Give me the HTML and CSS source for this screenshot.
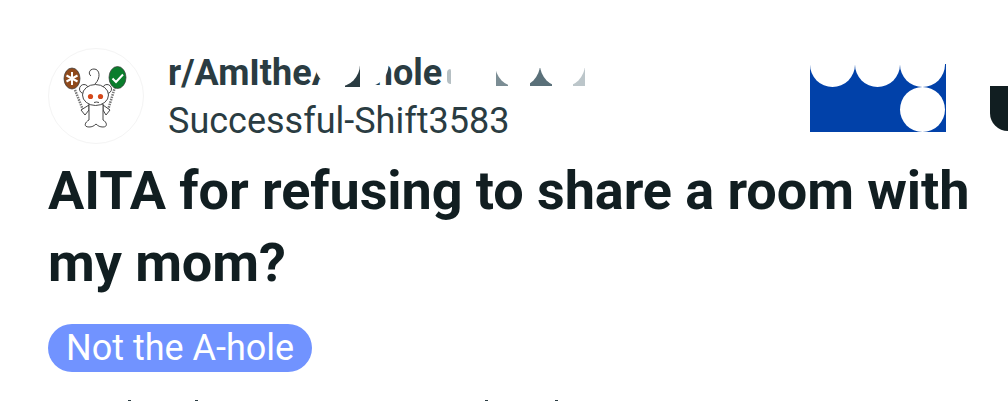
FILE: index.html
```html
<!DOCTYPE html>
<html lang="en">
<head>
    <meta charset="UTF-8">
    <meta name="viewport" content="width=device-width, initial-scale=1.0">
    <title>AITA for refusing to share a room with my mom?</title>
    <link rel="stylesheet" href="styles.css">
</head>
<body>
    <div class="post">
        <div class="post-header">
            <div class="avatar">
                <svg width="96" height="96" viewBox="0 0 96 96">
                    <path d="M27 42 L35 62 M67 39 L60 62" stroke="#777" stroke-width="2.5" stroke-dasharray="1.5 1" fill="none"/>
                    <path d="M47 36 C53 30 52 21 46 21 C41 21 40 26 43 28" stroke="#444" stroke-width="1" fill="none"/>
                    <ellipse cx="24" cy="30.5" rx="8" ry="10.5" fill="#8f4a1c" stroke="#333" stroke-width="0.7"/>
                    <path d="M24 24 V37 M18.5 27.5 L29.5 33.5 M18.5 33.5 L29.5 27.5" stroke="#fff" stroke-width="2"/>
                    <ellipse cx="69.5" cy="29.5" rx="8.5" ry="11" fill="#0a7d2c" stroke="#333" stroke-width="0.7"/>
                    <path d="M64.5 30.5 L68 34 L75 26.5" stroke="#fff" stroke-width="2" fill="none"/>
                    <g fill="#fff" stroke="#333" stroke-width="0.9">
                        <path d="M41 57 L33 62 L37 67 L41 62 Z M55 57 L62 62 L58 67 L55 62 Z"/>
                        <circle cx="36" cy="41" r="4.5"/>
                        <circle cx="59" cy="41" r="4.5"/>
                        <path d="M41 56 L41 72 C37 74 35 79 41 79 C44 79 46 78 48 76 C50 78 52 79 55 79 C60 79 59 74 55 72 L55 56 Z"/>
                        <ellipse cx="47.5" cy="47" rx="13" ry="10.5"/>
                    </g>
                    <circle cx="42.5" cy="48.5" r="2.6" fill="#d4481a"/>
                    <circle cx="52.5" cy="48.5" r="2.6" fill="#d4481a"/>
                    <path d="M46 54.5 Q48.5 53.5 51 54.5" stroke="#333" stroke-width="0.9" fill="none"/>
                </svg>
            </div>
            <div class="post-meta">
                <div class="subreddit">r/AmItheAsshole</div>
                <div class="username">Successful-Shift3583</div>
            </div>
            <!-- only the corners of these show between the dots -->
            <span class="stamp stamp-0"></span>
            <span class="stamp stamp-1"></span>
            <span class="stamp stamp-2"></span>
            <span class="stamp stamp-3"></span>
            <span class="stamp stamp-4"></span>
            <div class="dots">
                <span class="dot"></span>
                <span class="dot-shifted"></span>
                <span class="dot-gap"></span>
                <span class="dot"></span>
                <span class="dot"></span>
                <span class="dot"></span>
            </div>
            <div class="blue-block">
                <div class="bite-row bite-row-1">
                    <span class="dot"></span>
                    <span class="dot"></span>
                    <span class="dot"></span>
                </div>
                <div class="bite-row bite-row-2">
                    <span class="dot-gap"></span>
                    <span class="dot-gap"></span>
                    <span class="dot"></span>
                </div>
                <div class="bite-row bite-row-3">
                    <span class="dot"></span>
                    <span class="dot"></span>
                </div>
            </div>
            <div class="join-edge"></div>
        </div>
        <h1 class="post-title">AITA for refusing to share a room with my mom?</h1>
        <span class="flair">Not the A-hole</span>
        <div class="next-line">
            <span class="tick tick-1"></span>
            <span class="tick tick-2"></span>
            <span class="tick tick-3"></span>
            <span class="tick tick-4"></span>
        </div>
    </div>
</body>
</html>
```

FILE: styles.css
```css
body {
    font-family: Roboto, sans-serif;
    margin: 0;
    height: 401px;
    overflow: hidden;
    background-color: #fff;
}
.post {
    padding: 48px 0 0 48px;
}
.post-header {
    display: flex;
    align-items: center;
    height: 96px;
    position: relative;
}
.avatar {
    width: 96px;
    height: 96px;
    box-sizing: border-box;
    border: 1px solid #f4f4f4;
    border-radius: 50%;
    flex-shrink: 0;
}
.avatar svg {
    display: block;
    margin: -1px;
}
.post-meta {
    margin: 2px 0 0 24px;
}
.subreddit {
    font-size: 36px;
    line-height: 42px;
    font-weight: 700;
    color: #2a3c42;
}
.username {
    margin-top: 6px;
    font-size: 36px;
    line-height: 42px;
    color: #2a3c42;
}
.stamp {
    position: absolute;
    top: 20px;
    height: 18px;
}
.stamp-0 {
    left: 297px;
    width: 15px;
    height: 19px;
    background-color: #2a3c42;
}
.stamp-1 {
    left: 399px;
    top: 21px;
    width: 4px;
    height: 15px;
    border-radius: 4px 0 0 4px;
    background-color: #b5bfc3;
}
.stamp-2 {
    left: 448px;
    width: 12px;
    background-color: #7b8d94;
}
.stamp-3 {
    left: 482px;
    width: 22px;
    background-color: #5a7079;
}
.stamp-4 {
    left: 525px;
    width: 12px;
    background-color: #bcc6ca;
}
.dots {
    position: absolute;
    left: 267px;
    top: -6px;
    display: flex;
}
.dot, .dot-gap, .dot-shifted {
    width: 45px;
    height: 45px;
    flex-shrink: 0;
}
.dot {
    border-radius: 50%;
    background-color: #fff;
}
.dot-shifted {
    background: radial-gradient(circle at 6px 22.5px, #fff 22px, transparent 23px);
}
.blue-block {
    position: absolute;
    left: 762px;
    top: 16px;
    width: 136px;
    height: 68px;
    background-color: #0141a9;
    overflow: hidden;
}
.bite-row {
    position: absolute;
    left: 0;
    display: flex;
}
.bite-row-1 {
    top: -22px;
}
.bite-row-2 {
    top: 23px;
}
.bite-row-3 {
    top: 67.5px;
}
.join-edge {
    position: absolute;
    left: 942px;
    top: 38px;
    width: 18px;
    height: 45px;
    background-color: #111e21;
    border-bottom-left-radius: 18px;
}
.post-title {
    margin: 11px 0 0;
    width: 940px;
    font-size: 54px;
    letter-spacing: -0.08px;
    line-height: 72px;
    font-weight: 700;
    color: #111e21;
}
.flair {
    display: block;
    width: max-content;
    margin-top: 25px;
    padding: 0 18px;
    height: 48px;
    line-height: 48px;
    font-size: 36px;
    color: #fff;
    background-color: #7193ff;
    border-radius: 24px;
}
.next-line {
    display: flex;
    margin-top: 27px;
}
.tick {
    width: 3px;
    height: 4px;
    margin-top: 1px;
    background-color: #2a3c42;
}
.tick-1 {
    margin-left: 80px;
}
.tick-2 {
    margin-left: 64px;
}
.tick-3 {
    margin-left: 287px;
}
.tick-4 {
    margin-left: 67px;
}
```
